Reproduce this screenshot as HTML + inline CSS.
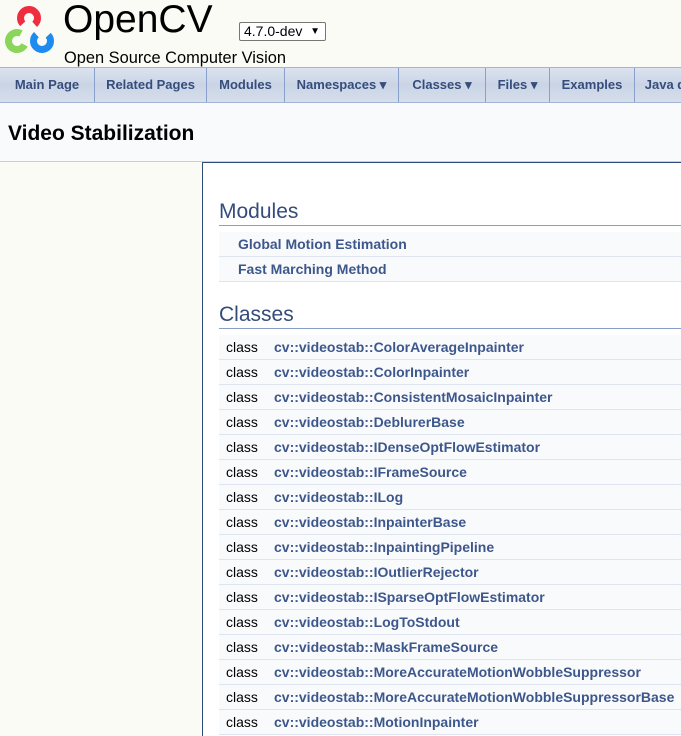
<!DOCTYPE html>
<html><head><meta charset="utf-8"><style>
body{margin:0;width:681px;height:736px;overflow:hidden;background:#fbfbf6;font-family:"Liberation Sans",sans-serif;position:relative}
.logo{position:absolute;left:0;top:0}
.t1{position:absolute;left:63px;top:-2px;font-size:39px;color:#000}
.t2{position:absolute;left:64px;top:49px;font-size:16.4px;color:#000}
.sel{position:absolute;left:239px;top:22px;width:87px;height:19px;border:1px solid #767676;border-radius:2px;background:#fff;font-size:14px;box-sizing:border-box;padding:0 0 0 4px;line-height:17px}
.nav{position:absolute;left:0;top:67px;width:681px;height:36px;background:linear-gradient(#dce3ef,#c9d4e6 50%,#d6deeb);border-top:1px solid #a3b4d6;border-bottom:1px solid #a3b4d6;box-sizing:border-box;white-space:nowrap}
.nav span{display:inline-block;height:34px;line-height:34px;font-size:13px;font-weight:bold;color:#364d7c;border-right:1px solid #8aa0cc;text-align:center;box-sizing:border-box;vertical-align:top}
.title{position:absolute;left:0;top:103px;width:681px;height:58px;background:#f9fafc;border-bottom:1px solid #c4cfe5}
.title div{position:absolute;left:8px;top:19px;font-size:21px;font-weight:bold}
.content{position:absolute;left:202px;top:162px;width:479px;height:574px;background:#fff;border-left:1px solid #2d4b7c;border-top:1px solid #2d4b7c;box-sizing:border-box}
h2{position:absolute;left:16px;margin:0;font-size:21px;font-weight:normal;color:#354c7b;width:470px;border-bottom:1px solid #879ecb;padding-bottom:1px}
.row{position:absolute;left:16px;width:470px;height:24px;background:#f9fafc;border-bottom:1px solid #dee4f0;font-size:14px;line-height:24px}
.row b{color:#3d578c;position:absolute;left:55px}
.row i{font-style:normal;position:absolute;left:7px}
.m b{left:19px}
</style></head><body>
<svg class="logo" width="62" height="58" viewBox="0 0 62 58">
<circle cx="29" cy="18" r="8.5" fill="none" stroke="#ef2d3f" stroke-width="7" stroke-dasharray="40 14" transform="rotate(137 29 18)"/>
<circle cx="17" cy="41" r="8.5" fill="none" stroke="#8bd55b" stroke-width="7" stroke-dasharray="40 14" transform="rotate(27 17 41)"/>
<circle cx="42" cy="41" r="8.5" fill="none" stroke="#1e8bf0" stroke-width="7" stroke-dasharray="40 14" transform="rotate(-43 42 41)"/>
</svg>
<div class="t1">OpenCV</div>
<div class="sel">4.7.0-dev<span style="position:absolute;right:5px;top:0;font-size:10px">&#9660;</span></div>
<div class="t2">Open Source Computer Vision</div>
<div class="nav"><span style="width:95px">Main Page</span><span style="width:112px">Related Pages</span><span style="width:78px">Modules</span><span style="width:114px">Namespaces ▾</span><span style="width:87px">Classes ▾</span><span style="width:64px">Files ▾</span><span style="width:85px">Examples</span><span style="width:60px;border:0">Java d</span></div>
<div class="title"><div>Video Stabilization</div></div>
<div class="content">
<h2 style="top:37px">Modules</h2>
<div class="row m" style="top:69px"><b>Global Motion Estimation</b></div>
<div class="row m" style="top:94px"><b>Fast Marching Method</b></div>
<h2 style="top:140px">Classes</h2>
<div class="row" style="top:172px"><i>class</i><b>cv::videostab::ColorAverageInpainter</b></div>
<div class="row" style="top:197px"><i>class</i><b>cv::videostab::ColorInpainter</b></div>
<div class="row" style="top:222px"><i>class</i><b>cv::videostab::ConsistentMosaicInpainter</b></div>
<div class="row" style="top:247px"><i>class</i><b>cv::videostab::DeblurerBase</b></div>
<div class="row" style="top:272px"><i>class</i><b>cv::videostab::IDenseOptFlowEstimator</b></div>
<div class="row" style="top:297px"><i>class</i><b>cv::videostab::IFrameSource</b></div>
<div class="row" style="top:322px"><i>class</i><b>cv::videostab::ILog</b></div>
<div class="row" style="top:347px"><i>class</i><b>cv::videostab::InpainterBase</b></div>
<div class="row" style="top:372px"><i>class</i><b>cv::videostab::InpaintingPipeline</b></div>
<div class="row" style="top:397px"><i>class</i><b>cv::videostab::IOutlierRejector</b></div>
<div class="row" style="top:422px"><i>class</i><b>cv::videostab::ISparseOptFlowEstimator</b></div>
<div class="row" style="top:447px"><i>class</i><b>cv::videostab::LogToStdout</b></div>
<div class="row" style="top:472px"><i>class</i><b>cv::videostab::MaskFrameSource</b></div>
<div class="row" style="top:497px"><i>class</i><b>cv::videostab::MoreAccurateMotionWobbleSuppressor</b></div>
<div class="row" style="top:522px"><i>class</i><b>cv::videostab::MoreAccurateMotionWobbleSuppressorBase</b></div>
<div class="row" style="top:547px"><i>class</i><b>cv::videostab::MotionInpainter</b></div>
</div>
</body></html>
